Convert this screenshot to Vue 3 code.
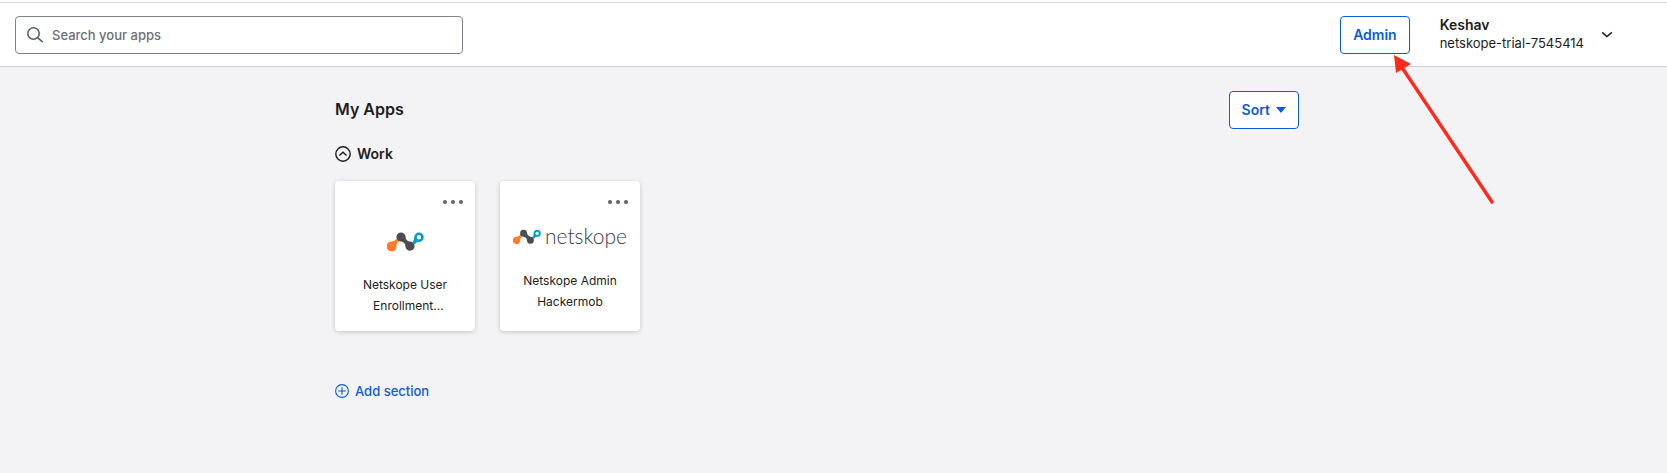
<template>
  <div class="dashboard">
    <header class="topbar">
      <label class="search">
        <svg class="search__icon" viewBox="0 0 18 18" aria-hidden="true">
          <circle cx="7.5" cy="7.5" r="5.7" />
          <path d="M11.6 11.6 L16.8 16.2" />
        </svg>
        <input v-model="query" class="search__input" type="text" placeholder="Search your apps" aria-label="Search your apps" />
      </label>

      <div class="topbar__actions">
        <div class="admin">
          <button class="button" type="button">Admin</button>
          <svg class="admin__arrow" viewBox="0 0 102 152" aria-hidden="true">
            <path class="admin__arrow-line" d="M9 14 L98 147" />
            <path class="admin__arrow-head" d="M0 0 L17 9 L2 18 Z" />
          </svg>
        </div>

        <button class="account" type="button">
          <span class="account__text">
            <strong class="account__name">Keshav</strong>
            <span class="account__org">netskope-trial-7545414</span>
          </span>
          <svg class="account__chevron" viewBox="0 0 12 8" aria-hidden="true">
            <path d="M1.2 1.4 L6 5.6 L10.8 1.4" />
          </svg>
        </button>
      </div>
    </header>

    <main class="content">
      <div class="content__inner">
        <div class="content__head">
          <h1 class="title">My Apps</h1>
          <button class="button" type="button">
            Sort
            <span class="button__caret" aria-hidden="true"></span>
          </button>
        </div>

        <section>
          <h2 class="section-title">
            <button class="section-title__toggle" type="button" :aria-expanded="open" @click="open = !open">
              <svg class="section-title__icon" viewBox="0 0 16 16" aria-hidden="true">
                <circle cx="8" cy="8" r="7.2" />
                <path d="M4.4 9.6 L8 6.2 L11.6 9.6" />
              </svg>
              Work
            </button>
          </h2>

          <div v-if="open" class="cards">
            <article v-for="app in apps" :key="app.id" :class="['card', { 'card--wordmark': app.wordmark }]">
              <button class="card__menu" type="button" :aria-label="`${app.id} options`">
                <span v-for="n in 3" :key="n" class="card__dot"></span>
              </button>
              <a class="card__link" href="#">
                <span class="logo">
                  <svg class="logo__mark" viewBox="0 0 37 20" aria-hidden="true">
                    <path class="logo__orange" d="M10.4 6.6 L12.3 8.8 L9.6 12 Q9.6 14 9.4 15.5 A4.9 4.9 0 1 1 4.6 9.6 Q7.8 9.2 10.4 6.6 Z" />
                    <path class="logo__blue" fill-rule="evenodd" d="M31.9 .5 a4.7 4.7 0 1 1 -.8 9.3 Q29 10.5 27.6 12.4 L25.4 10.2 Q27.4 8.5 27.2 5.2 A4.7 4.7 0 0 1 31.9 .5 Z M31.9 3 a2.2 2.2 0 1 0 0 4.4 a2.2 2.2 0 1 0 0 -4.4 Z" />
                    <path class="logo__dark" d="M14 .4 a4.6 4.6 0 0 1 4.6 4.6 Q18.8 8.6 22.6 9.6 A4.6 4.6 0 1 1 18.4 14.2 Q18.2 10.4 14 9.6 A4.6 4.6 0 1 1 14 .4 Z" />
                  </svg>
                  <span v-if="app.wordmark" class="logo__word">{{ app.wordmark }}</span>
                </span>
                <span class="card__label">{{ app.label }}</span>
              </a>
            </article>
          </div>
        </section>

        <button class="add-section" type="button">
          <svg class="add-section__icon" viewBox="0 0 14 14" aria-hidden="true">
            <circle cx="7" cy="7" r="6.4" />
            <path d="M7 3.2 V10.8 M3.2 7 H10.8" />
          </svg>
          Add section
        </button>
      </div>
    </main>
  </div>
</template>

<script setup>
import { ref } from 'vue';

const query = ref('');
const open = ref(true);

const apps = [
  { id: 'enrollment', label: 'Netskope User\n  Enrollment...' },
  { id: 'admin', label: 'Netskope Admin\nHackermob', wordmark: 'netskope' }
];
</script>

<style>
body {
  margin: 0;
  background: #f3f3f5;
}
</style>

<style scoped>
.dashboard {
  display: flow-root;
  min-height: 100vh;
  background: #f3f3f5;
  color: #1d1d21;
  font-family: Inter, 'Liberation Sans', sans-serif;
  font-size: 14px;
  line-height: 20px;
}

.dashboard *,
.dashboard {
  box-sizing: border-box;
}

button {
  padding: 0;
  border: 0;
  background: none;
  color: inherit;
  font: inherit;
  cursor: pointer;
}

.topbar {
  display: flex;
  align-items: center;
  justify-content: space-between;
  margin-top: 2px;
  padding: 13px 54px 12px 15px;
  border-top: 1px solid #d7d7dc;
  border-bottom: 1px solid #d0d0d8;
  background: #fff;
  box-shadow: 0 -2px #fff;
}

.search {
  display: flex;
  align-items: center;
  gap: 8px;
  flex: 0 1 448px;
  height: 38px;
  padding: 0 10px;
  border: 1px solid #82828e;
  border-radius: 4px;
}

.search__icon {
  width: 18px;
  height: 18px;
  fill: none;
  stroke: #52626d;
  stroke-width: 1.6;
}

.search__input {
  flex: 1;
  min-width: 0;
  padding: 0;
  border: 0;
  outline: 0;
  background: none;
  color: inherit;
  font: inherit;
  font-size: 13px;
  font-weight: 500;
}

.search__input::placeholder {
  color: #6e6e78;
  opacity: 1;
}

.topbar__actions {
  display: flex;
  align-items: center;
  gap: 30px;
}

.button {
  display: flex;
  align-items: center;
  gap: 6px;
  height: 38px;
  padding: 0 12px;
  border: 1px solid #0b5cd7;
  border-radius: 4px;
  background: #fff;
  color: #0b5cd7;
  font-weight: 600;
}

.button__caret {
  border: 5px solid transparent;
  border-top: 6px solid currentColor;
  border-bottom: 0;
}

.admin {
  position: relative;
}

.admin__arrow {
  position: absolute;
  z-index: 1;
  top: 39px;
  left: 54px;
  width: 102px;
  height: 152px;
  pointer-events: none;
}

.admin__arrow-line {
  stroke: #ff2a1c;
  stroke-width: 3.4;
  stroke-linecap: round;
}

.admin__arrow-head {
  fill: #ff2a1c;
}

.account {
  display: flex;
  align-items: center;
  gap: 17px;
}

.account__text {
  display: flex;
  flex-direction: column;
  padding-bottom: 2px;
  line-height: 18px;
  text-align: left;
}

.account__name {
  font-weight: 600;
}

.account__org {
  font-size: 13px;
}

.account__chevron {
  width: 12px;
  height: 8px;
  fill: none;
  stroke: currentColor;
  stroke-width: 1.5;
}

.content {
  padding: 24px 48px 40px 15px;
}

.content__inner {
  max-width: 964px;
  margin: 0 auto;
}

.content__head {
  display: flex;
  align-items: center;
  justify-content: space-between;
}

.title,
.section-title {
  margin: 0;
  font-weight: 600;
}

.title {
  padding-bottom: 2px;
  font-size: 16px;
}

.section-title {
  margin: 15px 0 17px;
  font-size: 14px;
}

.section-title__toggle {
  display: flex;
  align-items: center;
  gap: 6px;
}

.section-title__icon {
  width: 16px;
  height: 16px;
  fill: none;
  stroke: currentColor;
  stroke-width: 1.4;
}

.cards {
  display: flex;
  flex-wrap: wrap;
  gap: 25px;
}

.card {
  display: flex;
  flex-direction: column;
  width: 140px;
  min-height: 150px;
  border-radius: 4px;
  background: #fff;
  box-shadow: 0 1px 4px rgba(30, 30, 40, 0.22);
}

.card__menu {
  display: flex;
  align-self: flex-end;
  gap: 4px;
  padding: 19px 12px 8px;
}

.card__dot {
  width: 4px;
  height: 4px;
  border-radius: 50%;
  background: #62626a;
}

.card__link {
  display: flex;
  flex-direction: column;
  align-items: center;
  gap: 22px;
  padding-top: 20px;
  color: inherit;
  text-decoration: none;
}

.card--wordmark .card__link {
  padding-top: 16px;
}

.logo {
  display: flex;
  align-items: center;
  gap: 4px;
  height: 20px;
}

.logo__mark {
  width: 37px;
  height: 20px;
}

.card--wordmark .logo__mark {
  width: 28px;
  height: 16px;
}

.card--wordmark .logo {
  padding-bottom: 2px;
}

.logo__word {
  padding-bottom: 2px;
  color: #3c3d42;
  font-family: Lato, sans-serif;
  font-size: 21px;
  font-weight: 300;
}

.logo__orange {
  fill: #ff7a2d;
}

.logo__blue {
  fill: #00a0c8;
}

.logo__dark {
  fill: #4c4d52;
}

.card__label {
  font-size: 12px;
  line-height: 21px;
  text-align: center;
  white-space: pre-wrap;
}

.add-section {
  display: flex;
  align-items: center;
  gap: 6px;
  margin-top: 50px;
  color: #0b5cd7;
  font-size: 13px;
  font-weight: 500;
}

.add-section__icon {
  width: 14px;
  height: 14px;
  fill: none;
  stroke: currentColor;
  stroke-width: 1.1;
}
</style>
